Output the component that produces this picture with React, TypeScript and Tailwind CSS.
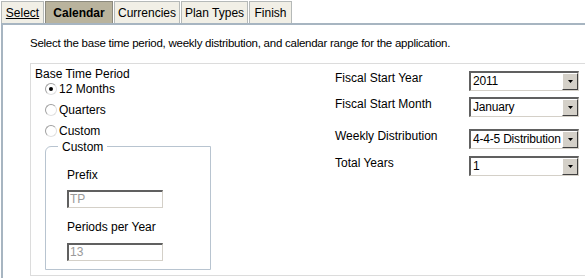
import React from 'react';

const font = { fontFamily: '"Liberation Sans", Tahoma, Arial, sans-serif' };

function Tab({ label, width, active, underline }: { label: string; width: string; active?: boolean; underline?: boolean }) {
  return (
    <div
      className={`${width} h-[22px] flex items-center justify-center border border-b-0 text-[12px] ${
        active
          ? 'bg-[#b9b39d] border-[#8c8a7e] font-bold text-black'
          : 'bg-[#f1efe6] border-[#b5b9b8] text-black'
      }`}
    >
      <span className={underline ? 'underline' : ''}>{label}</span>
    </div>
  );
}

function Radio({ label, checked }: { label: string; checked?: boolean }) {
  return (
    <div className="flex items-center h-[21px]">
      <div className="w-[12px] h-[12px] rounded-full border border-[#a0a0a0] border-r-[#e0e0e0] border-b-[#e0e0e0] bg-white flex items-center justify-center mr-[1px]">
        {checked && <div className="w-[4px] h-[4px] rounded-full bg-black" />}
      </div>
      <span className="text-[12px] ml-[1px]">{label}</span>
    </div>
  );
}

function Select({ value }: { value: string }) {
  return (
    <div className="w-[110px] h-[20px] flex border-t-2 border-l-2 border-t-[#606060] border-l-[#606060] border-b border-r border-b-[#d4d0c8] border-r-[#d4d0c8] bg-white">
      <div className="flex-1 pl-[2px] text-[12px] leading-[17px] whitespace-nowrap overflow-hidden tracking-[-0.2px]">{value}</div>
      <div className="w-[16px] h-[17px] shrink-0 bg-[#d4d0c8] border border-t-white border-l-white border-r-[#404040] border-b-[#404040] flex items-center justify-center">
        <svg width="7" height="4" viewBox="0 0 7 4">
          <path d="M1 0h5L3.5 3z" fill="#000" />
        </svg>
      </div>
    </div>
  );
}

function TextInput({ value }: { value: string }) {
  return (
    <div className="w-[96px] h-[18px] border-t-2 border-l-2 border-t-[#606060] border-l-[#606060] border-b border-r border-b-[#d4d0c8] border-r-[#d4d0c8] bg-white pl-[1px] text-[12px] leading-[15px] text-[#9a9a9a]">
      {value}
    </div>
  );
}

export default function App() {
  return (
    <div className="w-[585px] h-[278px] bg-white overflow-hidden text-black" style={font}>
      <div className="flex pl-[1px] pt-[1px] gap-[1px]">
        <Tab label="Select" width="w-[43px]" underline />
        <Tab label="Calendar" width="w-[68px]" active />
        <Tab label="Currencies" width="w-[66px]" />
        <Tab label="Plan Types" width="w-[67px]" />
        <Tab label="Finish" width="w-[43px]" />
      </div>
      <div className="h-[260px] border-t-2 border-l-2 border-[#a7b5c1] ml-[1px]">
        <div className="pl-[27px] pt-[10px] text-[11.5px] h-[38px] tracking-[-0.25px]">
          Select the base time period, weekly distribution, and calendar range for the application.
        </div>
        <div className="ml-[27px] w-[570px] h-[213px] border border-[#dcdcdc] flex">
          <div className="w-[300px] pl-[4px] pt-[3px]">
            <div className="text-[12px] h-[11px] leading-[15px]">Base Time Period</div>
            <div className="pl-[10px]">
              <Radio label="12 Months" checked />
              <Radio label="Quarters" />
              <Radio label="Custom" />
              <div className="relative mt-[5px] w-[166px] h-[124px] border border-[#b8c4d0] rounded-tl-[6px]">
                <span className="absolute -top-[9px] left-[12px] bg-white px-[4px] text-[12px]">Custom</span>
                <div className="pl-[21px] pt-[20px]">
                  <div className="text-[12px] h-[16px] leading-[16px] mb-[7px]">Prefix</div>
                  <TextInput value="TP" />
                  <div className="text-[12px] h-[16px] leading-[16px] mt-[11px] mb-[8px]">Periods per Year</div>
                  <TextInput value="13" />
                </div>
              </div>
            </div>
          </div>
          <div className="pl-[4px] pt-[7px]">
            {[
              ['Fiscal Start Year', '2011', 'h-[26px]'],
              ['Fiscal Start Month', 'January', 'h-[32px]'],
              ['Weekly Distribution', '4-4-5 Distribution', 'h-[27px]'],
              ['Total Years', '1', 'h-[27px]'],
            ].map(([label, value, h]) => (
              <div key={label} className={`flex items-start ${h}`}>
                <div className="w-[134px] text-[12px] leading-[15px]">{label}</div>
                <Select value={value} />
              </div>
            ))}
          </div>
        </div>
      </div>
    </div>
  );
}
